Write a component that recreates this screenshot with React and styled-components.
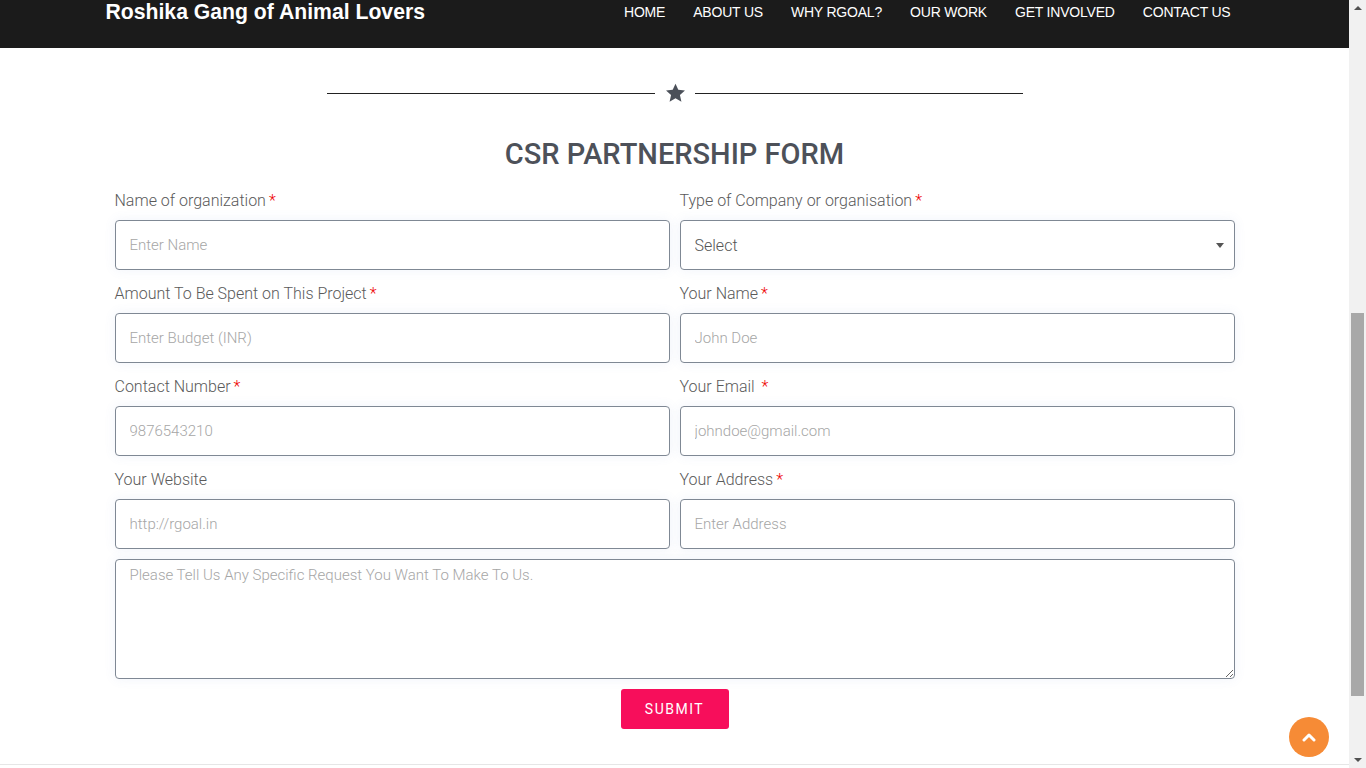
// CSR Partnership Form page
// Dark top bar, star divider, two column form and a floating back-to-top button

import React, { Component } from 'react';
import styled, { createGlobalStyle } from 'styled-components';

const GlobalStyle = createGlobalStyle`
    body {
        margin: 0 17px 0 0;
        background-color: white;
        font-family: Roboto, "Liberation Sans", Arial, sans-serif;
    }
    * {
        box-sizing: border-box;
    }
`;

const Header = styled.header`
    height: 48px;
    background-color: #1b1b1b;
`;

const HeaderInner = styled.div`
    width: 1140px;
    margin: 0 auto;
    display: flex;
    flex-direction: row;
    justify-content: space-between;
    align-items: flex-start;
`;

const Brand = styled.a`
    font-family: "Liberation Sans", Arial, sans-serif;
    font-weight: 700;
    font-size: 21.2px;
    line-height: 24px;
    color: white;
    text-decoration: none;
    padding-left: 1px;
`;

const NavList = styled.nav`
    display: flex;
    flex-direction: row;
    padding-top: 2px;
`;

const NavLink = styled.a`
    font-family: "Liberation Sans", Arial, sans-serif;
    font-size: 14px;
    line-height: 20px;
    color: white;
    text-decoration: none;
    padding: 0 14px;
    letter-spacing: -0.2px;
`;

const Section = styled.section`
    padding-top: 35px;
    padding-bottom: 35px;
`;

const Divider = styled.div`
    display: flex;
    flex-direction: row;
    align-items: center;
    justify-content: center;
    height: 20px;
`;

const DividerLine = styled.span`
    width: 328px;
    height: 1px;
    background-color: #222;
`;

const StarIcon = styled.svg`
    width: 21px;
    height: 20px;
    margin: 0 9px 0 10px;
    fill: #4b5059;
`;

const Title = styled.h2`
    margin: 33px 0 16px 0;
    text-align: center;
    font-family: Roboto, sans-serif;
    font-weight: 500;
    font-size: 29px;
    line-height: 36px;
    color: #4d5159;
`;

const Form = styled.form`
    width: 1120px;
    margin: 0 auto;
`;

const FieldGrid = styled.div`
    display: grid;
    grid-template-columns: 1fr 1fr;
    column-gap: 10px;
    row-gap: 11px;
`;

const Field = styled.div`
    display: flex;
    flex-direction: column;
`;

const Label = styled.label`
    font-family: Roboto, sans-serif;
    font-weight: 300;
    font-size: 16px;
    line-height: 24px;
    color: #5a5a5a;
    padding-top: 1px;
    margin-bottom: 7px;
`;

const Required = styled.span`
    color: #ee0000;
    margin-left: 3px;
`;

const inputLook = `
    width: 100%;
    border: 1px solid #7f8894;
    border-radius: 4px;
    background-color: white;
    box-shadow: 0 0 12px rgba(90, 120, 200, 0.09);
    font-family: Roboto, sans-serif;
    font-weight: 300;
    font-size: 15px;
    color: #555;
    outline: none;
    &::placeholder {
        color: #a6a6a6;
    }
`;

const TextInput = styled.input`
    ${inputLook}
    height: 50px;
    padding: 0 14px;
`;

const SelectWrap = styled.div`
    position: relative;
    &::after {
        content: '';
        position: absolute;
        right: 11px;
        top: 23px;
        border-left: 4.5px solid transparent;
        border-right: 4.5px solid transparent;
        border-top: 5px solid #555;
        pointer-events: none;
    }
`;

const Select = styled.select`
    ${inputLook}
    height: 50px;
    padding: 0 14px;
    appearance: none;
    font-size: 16px;
    color: #555;
`;

const TextArea = styled.textarea`
    ${inputLook}
    display: block;
    height: 120px;
    margin-top: 10px;
    padding: 6px 14px;
    line-height: 18px;
    resize: vertical;
`;

const ButtonRow = styled.div`
    display: flex;
    justify-content: center;
    margin-top: 10px;
`;

const SubmitButton = styled.button`
    width: 108px;
    height: 40px;
    border: none;
    border-radius: 3px;
    background-color: #f70e5b;
    color: white;
    font-family: Roboto, sans-serif;
    font-weight: 400;
    font-size: 14px;
    letter-spacing: 1.5px;
    cursor: pointer;
`;

const Footer = styled.footer`
    border-top: 1px solid #e6e6e6;
    height: 4px;
`;

const BackToTop = styled.a`
    position: fixed;
    right: 37px;
    bottom: 11px;
    width: 40px;
    height: 40px;
    border-radius: 50%;
    background-color: #f68b36;
    display: flex;
    align-items: center;
    justify-content: center;
    cursor: pointer;
`;

// stand-in for the browser scrollbar seen in the screenshot
const ScrollTrack = styled.div`
    position: fixed;
    top: 0;
    right: 0;
    width: 17px;
    height: 100vh;
    background-color: #f1f1f1;
    display: flex;
    flex-direction: column;
    align-items: center;
`;

const ScrollArrow = styled.span`
    width: 0;
    height: 0;
    margin: 6px 0;
    border-left: 4px solid transparent;
    border-right: 4px solid transparent;
    ${(p) => (p.down ? 'border-top: 4px solid #505050;' : 'border-bottom: 4px solid #505050;')}
`;

const ScrollThumb = styled.span`
    width: 13px;
    height: 383px;
    margin-top: 297px;
    margin-bottom: auto;
    background-color: #a8a8a8;
`;

const navItems = ['HOME', 'ABOUT US', 'WHY RGOAL?', 'OUR WORK', 'GET INVOLVED', 'CONTACT US'];

const fields = [
    { id: 'org', label: 'Name of organization', placeholder: 'Enter Name', required: true },
    { id: 'type', label: 'Type of Company or organisation', select: true, required: true },
    { id: 'budget', label: 'Amount To Be Spent on This Project', placeholder: 'Enter Budget (INR)', required: true },
    { id: 'name', label: 'Your Name', placeholder: 'John Doe', required: true },
    { id: 'phone', label: 'Contact Number', placeholder: '9876543210', required: true },
    { id: 'email', label: 'Your Email ', placeholder: 'johndoe@gmail.com', required: true },
    { id: 'website', label: 'Your Website', placeholder: 'http://rgoal.in' },
    { id: 'address', label: 'Your Address', placeholder: 'Enter Address', required: true },
];

class App extends Component {
    render() {
        return (
            <>
                <GlobalStyle />
                <Header>
                    <HeaderInner>
                        <Brand href="#">Roshika Gang of Animal Lovers</Brand>
                        <NavList>
                            {navItems.map((item) => (
                                <NavLink key={item} href="#">{item}</NavLink>
                            ))}
                        </NavList>
                    </HeaderInner>
                </Header>

                <Section>
                    <Divider>
                        <DividerLine />
                        <StarIcon viewBox="0 0 24 23">
                            <path d="M12 0.8l3.2 7.1 7.7.8-5.8 5.2 1.7 7.6L12 17.6l-6.8 3.9 1.7-7.6L1.1 8.7l7.7-.8z" />
                        </StarIcon>
                        <DividerLine />
                    </Divider>

                    <Title>CSR PARTNERSHIP FORM</Title>

                    <Form onSubmit={(e) => e.preventDefault()}>
                        <FieldGrid>
                            {fields.map((f) => (
                                <Field key={f.id}>
                                    <Label htmlFor={f.id}>
                                        {f.label}
                                        {f.required && <Required>*</Required>}
                                    </Label>
                                    {f.select ? (
                                        <SelectWrap>
                                            <Select id={f.id} defaultValue="">
                                                <option value="">Select</option>
                                                <option>Private Limited</option>
                                                <option>Public Limited</option>
                                                <option>NGO / Trust</option>
                                            </Select>
                                        </SelectWrap>
                                    ) : (
                                        <TextInput id={f.id} type="text" placeholder={f.placeholder} />
                                    )}
                                </Field>
                            ))}
                        </FieldGrid>
                        <TextArea placeholder="Please Tell Us Any Specific Request You Want To Make To Us." />
                        <ButtonRow>
                            <SubmitButton type="submit">SUBMIT</SubmitButton>
                        </ButtonRow>
                    </Form>
                </Section>

                <Footer />

                <BackToTop href="#">
                    <svg width="14" height="10" viewBox="0 0 14 10">
                        <path d="M2 8l5-5 5 5" fill="none" stroke="white" strokeWidth="3" strokeLinecap="round" strokeLinejoin="round" />
                    </svg>
                </BackToTop>

                <ScrollTrack>
                    <ScrollArrow />
                    <ScrollThumb />
                    <ScrollArrow down />
                </ScrollTrack>
            </>
        );
    }
}

export default App;
